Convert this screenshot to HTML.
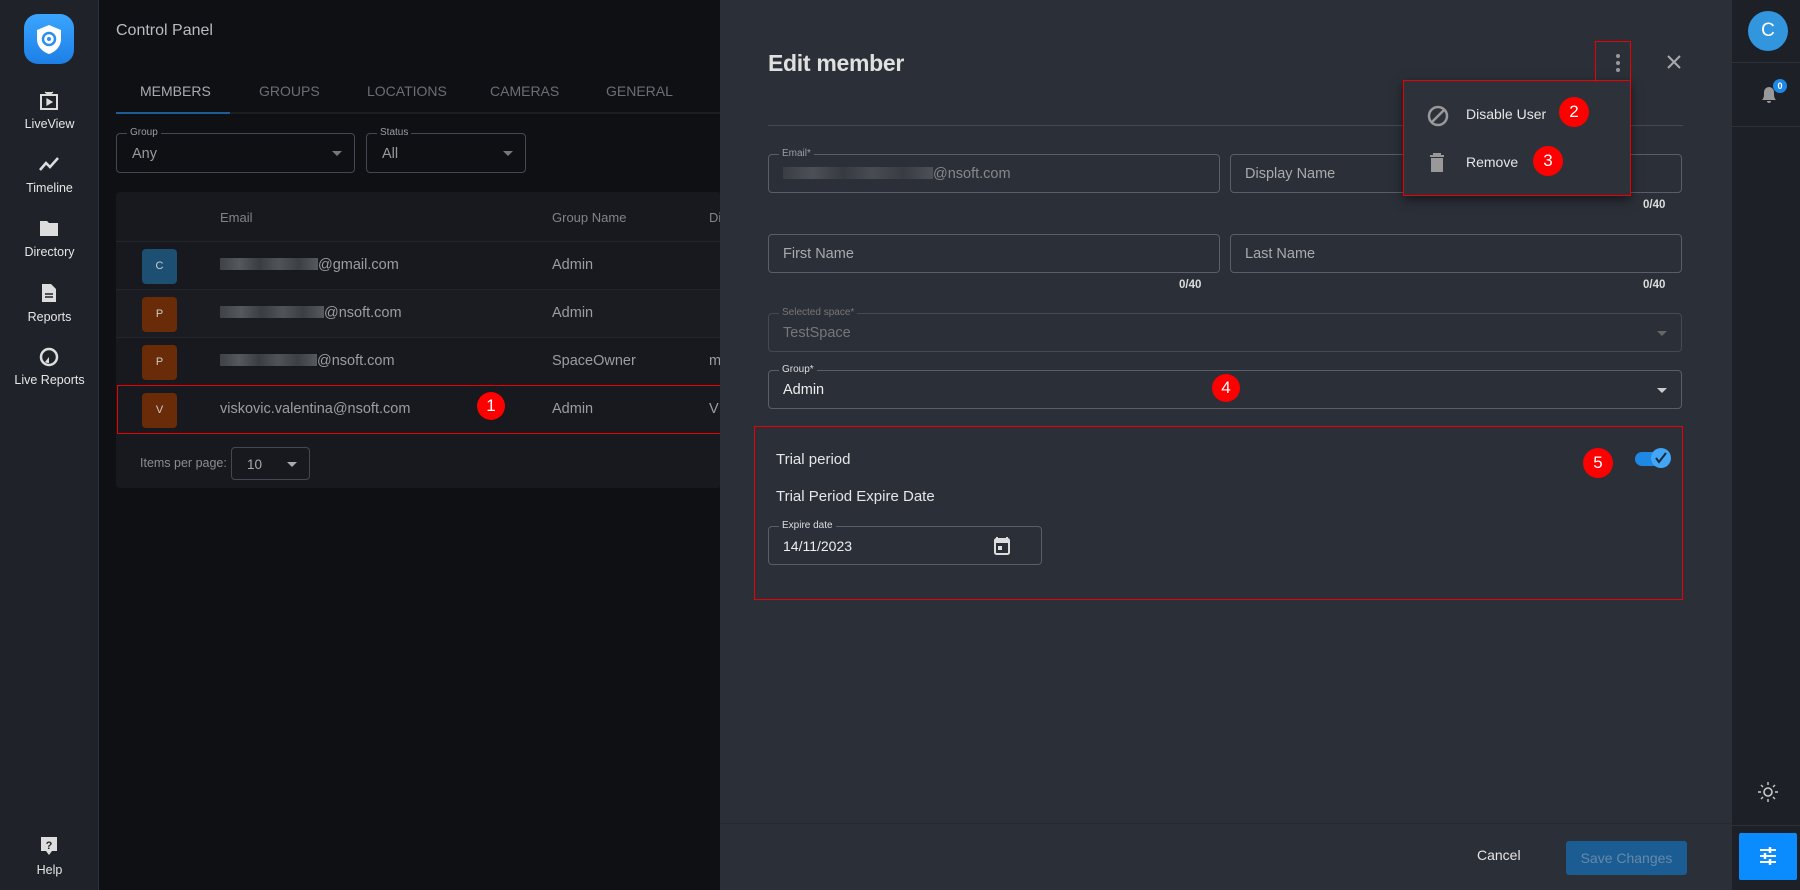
<!DOCTYPE html>
<html><head><meta charset="utf-8"><style>
*{box-sizing:border-box;margin:0;padding:0}
body{width:1800px;height:890px;overflow:hidden;background:#0e1014;font-family:"Liberation Sans",sans-serif;position:relative;color:#ddd}
.a{position:absolute}
.nav{left:0;top:0;width:99px;height:890px;background:#1f2228;border-right:1px solid #2c3038}
.ni{position:absolute;left:0;width:99px;text-align:center;font-size:12.5px;color:#e6e6e6}
.tab{position:absolute;top:83px;font-size:14px;color:#6a6e75}
.fld{position:absolute;border:1px solid #444851;border-radius:4px}
.lbl{position:absolute;top:-7px;left:10px;font-size:10px;padding:0 3px;color:#9a9ea5}
.row{position:absolute;left:116px;width:605px;height:48px;border-top:1px solid #22252b}
.av{position:absolute;left:26px;top:7px;width:35px;height:35px;border-radius:4px;font-size:11px;color:#ccc;text-align:center;line-height:35px}
.em{position:absolute;left:104px;top:15px;font-size:14.5px;color:#9a9da3}
.gn{position:absolute;left:436px;top:15px;font-size:14.5px;color:#9a9da3}
.blur{display:inline-block;height:12px;vertical-align:-1px;background:linear-gradient(90deg,#3e4146,#55585d 20%,#3a3d42 40%,#505358 60%,#3c3f44 80%,#56595e)}
.bad{position:absolute;width:28px;height:28px;border-radius:50%;background:#f00;color:#fff;font-size:17px;text-align:center;line-height:28px}
.pf{position:absolute;border:1px solid #5a5e66;border-radius:4px;height:39px}
.pf span.t{position:absolute;left:14px;top:11px;font-size:14.5px;color:#aaa}
.pl{position:absolute;top:-7px;left:10px;font-size:10px;padding:0 3px;background:#2b2f38;color:#9a9ea5}
.cnt{position:absolute;font-size:11.5px;font-weight:bold;color:#ddd}
</style></head><body>
<div class="a nav">
 <div class="a" style="left:24px;top:14px;width:50px;height:50px;border-radius:14px;background:linear-gradient(#3aa5ff,#1d7fe6)">
  <svg width="50" height="50" viewBox="0 0 50 50"><path d="M25 11l12 5v9c0 8-6 13-12 15-6-2-12-7-12-15v-9z" fill="#fff"/><circle cx="25" cy="25" r="6" fill="none" stroke="#2c8ff0" stroke-width="2.5"/><circle cx="25" cy="25" r="2" fill="#2c8ff0"/></svg></div>
 <svg class="a" style="left:38px;top:90px" width="22" height="22" viewBox="0 0 22 22"><rect x="3" y="5" width="16" height="14" fill="none" stroke="#ddd" stroke-width="2"/><path d="M9 9l5 3-5 3z M7 2l4 3 4-3" fill="#ddd" stroke="#ddd" stroke-width="1.2"/></svg>
 <div class="ni" style="top:117px">LiveView</div>
 <svg class="a" style="left:38px;top:154px" width="22" height="20"><path d="M2 16l6-7 4 4 8-9" fill="none" stroke="#ddd" stroke-width="2.5"/></svg>
 <div class="ni" style="top:181px">Timeline</div>
 <svg class="a" style="left:39px;top:219px" width="20" height="18"><path d="M1 2h7l2 2h9v13H1z" fill="#ddd"/></svg>
 <div class="ni" style="top:245px">Directory</div>
 <svg class="a" style="left:41px;top:283px" width="16" height="20"><path d="M1 1h9l5 5v13H1z" fill="#ddd"/><path d="M4 11h8M4 14h8" stroke="#1f2228" stroke-width="1.5"/></svg>
 <div class="ni" style="top:310px">Reports</div>
 <svg class="a" style="left:39px;top:347px" width="20" height="20"><circle cx="10" cy="10" r="8" fill="none" stroke="#ddd" stroke-width="2.5"/><path d="M10 4v6l-4 5a6 6 0 0 0 4 1z" fill="#ddd"/></svg>
 <div class="ni" style="top:373px">Live Reports</div>
 <svg class="a" style="left:40px;top:836px" width="18" height="20"><path d="M1 1h16v14h-5l-3 4-3-4H1z" fill="#ddd"/><text x="9" y="13" font-size="11" font-weight="bold" text-anchor="middle" fill="#1f2228" font-family="Liberation Sans">?</text></svg>
 <div class="ni" style="top:863px">Help</div>
</div>
<div class="a" style="left:116px;top:22px;font-size:16px;color:#b8bbc0">Control Panel</div>
<div class="tab" style="left:140px;color:#a8abb0">MEMBERS</div>
<div class="tab" style="left:259px">GROUPS</div>
<div class="tab" style="left:367px">LOCATIONS</div>
<div class="tab" style="left:490px">CAMERAS</div>
<div class="tab" style="left:606px">GENERAL</div>
<div class="a" style="left:116px;top:112px;width:605px;height:2px;background:#1a1d22"></div>
<div class="a" style="left:116px;top:112px;width:114px;height:2px;background:#1e5c98"></div>
<div class="fld" style="left:116px;top:133px;width:239px;height:40px"><span class="lbl" style="background:#0e1014">Group</span><span class="a" style="left:15px;top:12px;font-size:14.5px;color:#999">Any</span><span class="a" style="right:12px;top:17px;border:5px solid transparent;border-top-color:#777"></span></div>
<div class="fld" style="left:366px;top:133px;width:160px;height:40px"><span class="lbl" style="background:#0e1014">Status</span><span class="a" style="left:15px;top:12px;font-size:14.5px;color:#999">All</span><span class="a" style="right:12px;top:17px;border:5px solid transparent;border-top-color:#777"></span></div>
<div class="a" style="left:116px;top:192px;width:605px;height:296px;background:#17191e;border-radius:4px"></div>
<div class="a" style="left:220px;top:210px;font-size:13px;color:#7f838a">Email</div>
<div class="a" style="left:552px;top:210px;font-size:13px;color:#7f838a">Group Name</div>
<div class="a" style="left:709px;top:210px;font-size:13px;color:#7f838a">Di</div>
<div class="row" style="top:241px"><div class="av" style="background:#1d4f73">C</div><div class="em"><span class="blur" style="width:98px"></span>@gmail.com</div><div class="gn">Admin</div></div>
<div class="row" style="top:289px;background:#1a1c21"><div class="av" style="background:#6a2c08">P</div><div class="em"><span class="blur" style="width:104px"></span>@nsoft.com</div><div class="gn">Admin</div></div>
<div class="row" style="top:337px"><div class="av" style="background:#6a2c08">P</div><div class="em"><span class="blur" style="width:97px"></span>@nsoft.com</div><div class="gn">SpaceOwner</div><div class="gn" style="left:593px">m</div></div>
<div class="row" style="top:385px"><div class="av" style="background:#6a2c08">V</div><div class="em">viskovic.valentina@nsoft.com</div><div class="gn">Admin</div><div class="gn" style="left:593px">V</div></div>
<div class="a" style="left:117px;top:385px;width:606px;height:49px;border:1.5px solid #e00"></div>
<div class="bad" style="left:477px;top:392px">1</div>
<div class="a" style="left:140px;top:456px;font-size:12.5px;color:#8a8d93">Items per page:</div>
<div class="fld" style="left:231px;top:447px;width:79px;height:33px"><span class="a" style="left:15px;top:9px;font-size:13.5px;color:#aaa">10</span><span class="a" style="right:12px;top:14px;border:5px solid transparent;border-top-color:#aaa"></span></div>

<div class="a" style="left:720px;top:0;width:1011px;height:890px;background:#2b2f38"></div>
<div class="a" style="left:720px;top:823px;width:1011px;height:1px;background:#262a31"></div>
<div class="a" style="left:768px;top:50px;font-size:23px;font-weight:bold;color:#e0e0e0;letter-spacing:-0.3px">Edit member</div>
<svg class="a" style="left:1614px;top:53px" width="8" height="20"><circle cx="4" cy="3" r="2" fill="#999"/><circle cx="4" cy="10" r="2" fill="#999"/><circle cx="4" cy="17" r="2" fill="#999"/></svg>
<svg class="a" style="left:1666px;top:54px" width="16" height="16"><path d="M2 2l12 12M14 2L2 14" stroke="#aaa" stroke-width="2"/></svg>
<div class="a" style="left:768px;top:125px;width:915px;height:1px;background:#454952"></div>
<div class="pf" style="left:768px;top:154px;width:452px"><span class="pl">Email*</span><span class="t" style="color:#888"><span class="blur" style="width:150px;opacity:.8"></span>@nsoft.com</span></div>
<div class="pf" style="left:1230px;top:154px;width:452px"><span class="t">Display Name</span></div>
<div class="cnt" style="left:1643px;top:199px">0/40</div>
<div class="pf" style="left:768px;top:234px;width:452px"><span class="t">First Name</span></div>
<div class="pf" style="left:1230px;top:234px;width:452px"><span class="t">Last Name</span></div>
<div class="cnt" style="left:1179px;top:279px">0/40</div>
<div class="cnt" style="left:1643px;top:279px">0/40</div>
<div class="pf" style="left:768px;top:313px;width:914px;border-color:#454952"><span class="pl" style="color:#777">Selected space*</span><span class="t" style="color:#777">TestSpace</span><span class="a" style="right:14px;top:17px;border:5px solid transparent;border-top-color:#666"></span></div>
<div class="pf" style="left:768px;top:370px;width:914px"><span class="pl" style="color:#ddd">Group*</span><span class="t" style="color:#eee">Admin</span><span class="a" style="right:14px;top:17px;border:5px solid transparent;border-top-color:#ccc"></span></div>
<div class="bad" style="left:1212px;top:374px">4</div>
<div class="a" style="left:754px;top:426px;width:929px;height:174px;border:1.5px solid #e00"></div>
<div class="a" style="left:776px;top:451px;font-size:15px;color:#e6e6e6">Trial period</div>
<div class="a" style="left:776px;top:488px;font-size:15px;color:#e6e6e6">Trial Period Expire Date</div>
<div class="bad" style="left:1583px;top:448px;width:30px;height:30px;line-height:30px">5</div>
<div class="a" style="left:1635px;top:452px;width:30px;height:14px;border-radius:7px;background:#1e88e5"></div>
<div class="a" style="left:1651px;top:448px;width:20px;height:20px;border-radius:50%;background:#42a5f5"></div>
<svg class="a" style="left:1654px;top:451px" width="14" height="14"><path d="M2 7l3 4 7-9" fill="none" stroke="#1a2a3a" stroke-width="2"/></svg>
<div class="pf" style="left:768px;top:526px;width:274px;border-color:#5a5e66"><span class="pl" style="color:#ddd">Expire date</span><span class="t" style="color:#eee;font-size:14px">14/11/2023</span>
<svg class="a" style="left:224px;top:9px" width="18" height="20"><path d="M4 1v3M14 1v3" stroke="#ddd" stroke-width="2"/><rect x="2" y="3" width="14" height="15" rx="1.5" fill="none" stroke="#ddd" stroke-width="2"/><rect x="2" y="3" width="14" height="4" fill="#ddd"/><rect x="5" y="10" width="4" height="4" fill="#ddd"/></svg></div>
<div class="a" style="left:1477px;top:847px;font-size:14px;color:#e6e6e6">Cancel</div>
<div class="a" style="left:1566px;top:841px;width:121px;height:34px;background:#1b5c92;border-radius:3px;font-size:14px;color:#6689ab;text-align:center;line-height:34px">Save Changes</div>

<div class="a" style="left:1403px;top:80px;width:228px;height:116px;background:#2d3139;box-shadow:0 4px 10px rgba(0,0,0,.5);border:1.5px solid #e00"></div>
<div class="a" style="left:1595px;top:41px;width:36px;height:41px;border:1.5px solid #e00;border-bottom:none"></div>
<svg class="a" style="left:1426px;top:104px" width="24" height="24"><circle cx="12" cy="12" r="9" fill="none" stroke="#999" stroke-width="2.5"/><path d="M6 18L18 6" stroke="#999" stroke-width="2.5"/></svg>
<div class="a" style="left:1466px;top:106px;font-size:14px;color:#e6e6e6">Disable User</div>
<div class="bad" style="left:1559px;top:97px;width:30px;height:30px;line-height:30px">2</div>
<svg class="a" style="left:1429px;top:153px" width="16" height="20"><path d="M1 3h14M5 3V1h6v2" stroke="#999" stroke-width="2"/><path d="M2 5h12v14H2z" fill="#999"/></svg>
<div class="a" style="left:1466px;top:154px;font-size:14px;color:#e6e6e6">Remove</div>
<div class="bad" style="left:1533px;top:146px;width:30px;height:30px;line-height:30px">3</div>

<div class="a" style="left:1731px;top:0;width:69px;height:890px;background:#1d2027;border-left:1px solid #2c3038"></div>
<div class="a" style="left:1748px;top:11px;width:40px;height:40px;border-radius:50%;background:#3196de;color:#fff;font-size:19px;text-align:center;line-height:40px">C</div>
<div class="a" style="left:1731px;top:62px;width:69px;height:1px;background:#2c3038"></div>
<svg class="a" style="left:1758px;top:84px" width="22" height="22"><path d="M4 16c2-2 2-4 2-8a5 5 0 0 1 10 0c0 4 0 6 2 8z M9 17a2 2 0 0 0 4 0" fill="#999"/></svg>
<div class="a" style="left:1773px;top:79px;width:14px;height:14px;border-radius:50%;background:#1e88e5;color:#fff;font-size:9px;font-weight:bold;text-align:center;line-height:14px">0</div>
<div class="a" style="left:1731px;top:126px;width:69px;height:1px;background:#2c3038"></div>
<svg class="a" style="left:1757px;top:781px" width="22" height="22"><circle cx="11" cy="11" r="4" fill="none" stroke="#ccc" stroke-width="1.6"/><path d="M11 1v3M11 18v3M1 11h3M18 11h3M4 4l2 2M16 16l2 2M4 18l2-2M16 6l2-2" stroke="#ccc" stroke-width="1.4"/></svg>
<div class="a" style="left:1731px;top:825px;width:69px;height:1px;background:#2c3038"></div>
<div class="a" style="left:1739px;top:833px;width:58px;height:47px;background:#0a8cff;border-radius:2px"></div>
<svg class="a" style="left:1758px;top:846px" width="20" height="20"><path d="M2 4h16M2 10h16M2 16h16" stroke="#fff" stroke-width="2"/><path d="M12 1v6M7 7v6M12 13v6" stroke="#fff" stroke-width="2.5"/></svg>
</body></html>
